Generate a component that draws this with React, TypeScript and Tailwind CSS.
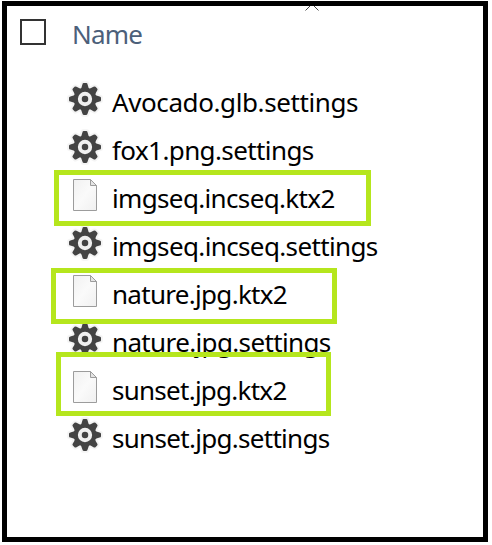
type Entry = { name: string; kind: "gear" | "file"; tracking: string };

const entries: Entry[] = [
  { name: "Avocado.glb.settings", kind: "gear", tracking: "tracking-[-0.4px]" },
  { name: "fox1.png.settings", kind: "gear", tracking: "tracking-[-0.6px]" },
  { name: "imgseq.incseq.ktx2", kind: "file", tracking: "tracking-[-0.65px]" },
  { name: "imgseq.incseq.settings", kind: "gear", tracking: "tracking-[-0.63px]" },
  { name: "nature.jpg.ktx2", kind: "file", tracking: "tracking-[-0.7px]" },
  { name: "nature.jpg.settings", kind: "gear", tracking: "tracking-[-0.64px]" },
  { name: "sunset.jpg.ktx2", kind: "file", tracking: "tracking-[-0.74px]" },
  { name: "sunset.jpg.settings", kind: "gear", tracking: "tracking-[-0.7px]" },
];

const teeth = [0, 45, 90, 135, 180, 225, 270, 315];

function GearIcon() {
  return (
    <svg className="h-9 w-9" viewBox="-18 -18 36 36">
      <g fill="#f4f4f4" stroke="#f4f4f4" strokeWidth="4" strokeLinejoin="round">
        <circle r="11.5" />
        {teeth.map((a) => (
          <path key={a} d="M-4-10.5-2-15.8H2L4-10.5Z" transform={`rotate(${a})`} />
        ))}
      </g>
      <g fill="#434343">
        <circle r="10.9" />
        {teeth.map((a) => (
          <path key={a} d="M-5.2-9Q-3.2-11-2.6-14.6Q-2.4-16-1.2-16H1.2Q2.4-16 2.6-14.6Q3.2-11 5.2-9Z" transform={`rotate(${a})`} />
        ))}
      </g>
      <circle r="5.2" fill="none" stroke="#f0f0f0" strokeWidth="3.9" />
    </svg>
  );
}

function FileIcon() {
  return (
    <svg className="h-8 w-6" viewBox="0 0 24 32">
      <defs>
        <linearGradient id="paper" x1="0" y1="0" x2="1" y2="1">
          <stop offset="0" stopColor="#f1f1f1" />
          <stop offset="0.5" stopColor="#fafafa" />
          <stop offset="1" stopColor="#f0f0f0" />
        </linearGradient>
      </defs>
      <path d="M.5.5H17.5L23.5 6.5V31.5H.5Z" fill="url(#paper)" stroke="#9c9c9c" />
      <path d="M17.5.5V6.5H23.5Z" fill="#e4e4e4" stroke="#9c9c9c" />
    </svg>
  );
}

export default function App() {
  return (
    <div className="relative h-[545px] w-[492px] overflow-hidden bg-white pt-px pl-0.5 font-['Noto_Sans','Open_Sans',sans-serif]">
      <main className="h-[541px] w-[486px] overflow-hidden border-5 border-black">
        <header className="flex h-[69px] items-start pl-[13px]">
          <span className="mt-[13px] size-[26px] shrink-0 border-2 border-[#333]" />
          <span className="mt-2.5 ml-[26px] w-[74px] text-[26px] leading-[36px] tracking-[-0.8px] text-[#4c607a]">Name</span>
          <svg className="-mt-0.5 ml-[159px] h-[7px] w-[14px]" viewBox="0 0 14 7" fill="none" stroke="#444">
            <path d="M.5 6.5 7 0 13.5 6.5" />
          </svg>
        </header>
        <ul>
          {entries.map((e) => (
            <li key={e.name} className="flex h-12 items-center">
              <span className="ml-[60px] flex w-9 shrink-0 justify-center">
                {e.kind === "gear" ? <GearIcon /> : <FileIcon />}
              </span>
              <span className={`ml-[9px] pt-1.5 text-[26px] leading-[36px] whitespace-nowrap text-black ${e.tracking}`}>{e.name}</span>
            </li>
          ))}
        </ul>
      </main>
      <div className="absolute top-[170px] left-[54px] h-14 w-[317px] border-5 border-[#b5e61d]" />
      <div className="absolute top-[268px] left-[51px] h-14 w-[286px] border-5 border-[#b5e61d]" />
      <div className="absolute top-[352px] left-[56px] h-16 w-[275px] border-5 border-[#b5e61d]" />
    </div>
  );
}
